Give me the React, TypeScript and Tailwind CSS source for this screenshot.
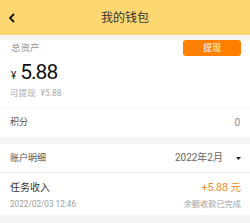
import React from 'react';

const font = { fontFamily: 'Roboto, "Noto Sans CJK SC", sans-serif' };

export default function App() {
  return (
    <div className="min-h-screen w-[250px] bg-[#f5f5f5]" style={font}>
      {/* Header */}
      <div className="relative flex h-[35px] items-center justify-center bg-[#fdd870]">
        <svg className="absolute left-[9px] top-[13px]" width="6" height="10" viewBox="0 0 6 10">
          <polyline points="5,1 1,5 5,9" fill="none" stroke="#111" strokeWidth="1.8" />
        </svg>
        <span className="text-[12px] text-[#333]">我的钱包</span>
      </div>

      {/* Assets */}
      <div className="bg-white pl-[10px] pr-[9px]">
        <div className="mt-[5px] flex h-[16px] items-center justify-between pl-px">
          <span className="text-[9.5px] leading-none text-[#999]">总资产</span>
          <button className="flex h-[16px] w-[58px] items-center justify-center rounded-[3px] bg-[#ff7f00] text-[9px] leading-none text-white">
            提现
          </button>
        </div>
        <div className="mt-[5px] flex h-[22px] items-baseline pl-px leading-[22px] text-[#111]">
          <span className="text-[10px]">¥</span>
          <span className="ml-[4px] text-[21px] tracking-[-1px]">5.88</span>
        </div>
        <div className="mt-[3px] flex h-[14px] items-center text-[8.5px] leading-none text-[#aaa]">
          <span>可提现</span>
          <span className="ml-[5px]">¥5.88</span>
        </div>
        <div className="h-[7px]" />
      </div>
      <div className="h-px bg-[#f4f4f4]" />
      <div className="flex h-[29px] items-center justify-between bg-white pl-[10px] pr-[10px] text-[9px] leading-none">
        <span className="text-[#555]">积分</span>
        <span className="text-[10px] text-[#888]">0</span>
      </div>

      <div className="h-[7px]" />

      {/* Details */}
      <div className="flex h-[28px] items-center justify-between bg-white pl-[10px] pr-[9px] leading-none">
        <span className="text-[9px] text-[#555]">账户明细</span>
        <div className="flex items-center">
          <span className="text-[10px] text-[#666]">2022年2月</span>
          <svg className="ml-[13px]" width="5" height="3" viewBox="0 0 5 3">
            <polygon points="0,0 5,0 2.5,3" fill="#222" />
          </svg>
        </div>
      </div>
      <div className="h-px bg-[#f2f2f2]" />
      <div className="bg-white pl-[10px] pr-[9px] pt-[7px] pb-[4px] leading-none">
        <div className="flex h-[16px] items-center justify-between">
          <span className="text-[10px] text-[#333]">任务收入</span>
          <span className="text-[10.5px] text-[#ef8a1c]">+5.88 元</span>
        </div>
        <div className="mt-[1px] flex h-[14px] items-center justify-between text-[#a0a0a0]">
          <span className="text-[8.2px]">2022/02/03 12:46</span>
          <span className="text-[8.2px]">余额收款已完成</span>
        </div>
      </div>
    </div>
  );
}
